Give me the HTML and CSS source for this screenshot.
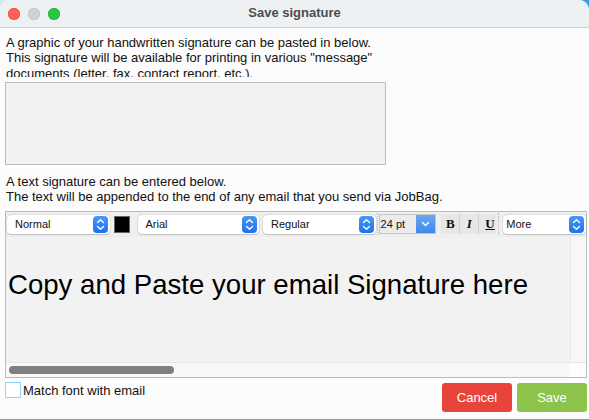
FILE: index.html
```html
<!DOCTYPE html>
<html>
<head>
<meta charset="utf-8">
<link rel="stylesheet" href="styles.css">
</head>
<body>
<div class="window">
  <div class="titlebar">
    <div class="lights">
      <span class="light red"></span>
      <span class="light gray"></span>
      <span class="light green"></span>
    </div>
    <div class="title">Save signature</div>
  </div>
  <div class="content">
    <div class="intro">
      A graphic of your handwritten signature can be pasted in below.<br>
      This signature will be available for printing in various "message"<br>
      documents (letter, fax, contact report, etc.).
    </div>
    <div class="graphic"></div>
    <div class="intro2">
      A text signature can be entered below.<br>
      The text will be appended to the end of any email that you send via JobBag.
    </div>
    <div class="editor">
      <div class="toolbar">
        <div class="select sel-normal"><span>Normal</span><span class="spin"><svg width="15" height="17" viewBox="0 0 15 17"><path d="M4.5 6.5 L7.5 3.8 L10.5 6.5 M4.5 10.5 L7.5 13.2 L10.5 10.5" fill="none" stroke="#fff" stroke-width="1.4" stroke-linecap="round" stroke-linejoin="round"/></svg></span></div>
        <div class="swatch"></div>
        <div class="select sel-font"><span>Arial</span><span class="spin"><svg width="15" height="17" viewBox="0 0 15 17"><path d="M4.5 6.5 L7.5 3.8 L10.5 6.5 M4.5 10.5 L7.5 13.2 L10.5 10.5" fill="none" stroke="#fff" stroke-width="1.4" stroke-linecap="round" stroke-linejoin="round"/></svg></span></div>
        <div class="select sel-style"><span>Regular</span><span class="spin"><svg width="15" height="17" viewBox="0 0 15 17"><path d="M4.5 6.5 L7.5 3.8 L10.5 6.5 M4.5 10.5 L7.5 13.2 L10.5 10.5" fill="none" stroke="#fff" stroke-width="1.4" stroke-linecap="round" stroke-linejoin="round"/></svg></span></div>
        <div class="sep"></div>
        <div class="size"><span class="size-val">24 pt</span><span class="size-btn"><svg width="19" height="18" viewBox="0 0 19 18"><path d="M6.5 7.5 L9.5 10.5 L12.5 7.5" fill="none" stroke="#fff" stroke-width="1.4" stroke-linecap="round" stroke-linejoin="round"/></svg></span></div>
        <div class="fmt">
          <span class="fbtn b">B</span>
          <span class="fbtn i">I</span>
          <span class="fbtn u">U</span>
        </div>
        <div class="sep sep2"></div>
        <div class="select sel-more"><span>More</span><span class="spin"><svg width="15" height="17" viewBox="0 0 15 17"><path d="M4.5 6.5 L7.5 3.8 L10.5 6.5 M4.5 10.5 L7.5 13.2 L10.5 10.5" fill="none" stroke="#fff" stroke-width="1.4" stroke-linecap="round" stroke-linejoin="round"/></svg></span></div>
      </div>
      <div class="editarea">
        <div class="edittext">Copy and Paste your email Signature here</div>
        <div class="vgutter"></div>
      </div>
      <div class="hscroll">
        <div class="htrack"><div class="thumb"></div></div>
        <div class="corner"></div>
      </div>
    </div>
    <div class="footer">
      <label class="check"><span class="box"></span><span>Match font with email</span></label>
      <div class="buttons">
        <button class="btn cancel">Cancel</button>
        <button class="btn save">Save</button>
      </div>
    </div>
  </div>
</div>
</body>
</html>
```

FILE: styles.css
```css
html, body {
  margin: 0;
  padding: 0;
}
body {
  width: 589px;
  height: 420px;
  overflow: hidden;
  background: linear-gradient(to right, #d9e7f3 0%, #cfe2f2 80%, #3c9be2 100%);
  font-family: "Liberation Sans", Arial, sans-serif;
  color: #111;
}
.window {
  width: 589px;
  height: 419px;
  background: #fcfcfc;
  border-bottom: 1px solid #9a9a9a;
  border-radius: 10px 10px 0 0;
  overflow: hidden;
  display: flex;
  flex-direction: column;
}
.titlebar {
  height: 27px;
  flex: none;
  background: #eef1f4;
  border-bottom: 1px solid #d3d3d3;
  display: flex;
  align-items: center;
  position: relative;
}
.lights {
  display: flex;
  gap: 8px;
  padding-left: 8px;
  padding-top: 1px;
}
.light {
  width: 12px;
  height: 12px;
  border-radius: 50%;
  display: block;
}
.light.red { background: #fe5f57; box-shadow: inset 0 0 0 0.5px #e0443e; }
.light.gray { background: #d1d1d1; box-shadow: inset 0 0 0 0.5px #bdbdbd; }
.light.green { background: #28c840; box-shadow: inset 0 0 0 0.5px #1dad2b; }
.title {
  position: absolute;
  left: 0;
  right: 0;
  top: 0;
  height: 27px;
  line-height: 26px;
  text-align: center;
  font-weight: bold;
  font-size: 13px;
  color: #4d4d4d;
  pointer-events: none;
}
.content {
  flex: 1;
  display: flex;
  flex-direction: column;
  padding: 6px 2px 0 5px;
}
.intro {
  font-size: 13px;
  line-height: 15.3px;
  height: 43px;
  margin-bottom: 2px;
  overflow: hidden;
  padding-left: 1px;
  padding-top: 1px;
  box-sizing: border-box;
}
.graphic {
  margin-top: 3px;
  width: 379px;
  height: 81px;
  background: #f2f2f2;
  border: 1px solid #bdbdbd;
}
.intro2 {
  margin-top: 9px;
  font-size: 13px;
  line-height: 15px;
  padding-left: 1px;
}
.editor {
  margin-top: 7px;
  border: 1px solid #bcbcbc;
  display: flex;
  flex-direction: column;
  height: 165px;
}
.toolbar {
  height: 24px;
  flex: none;
  background: #efefef;
  display: flex;
  align-items: center;
  padding-left: 1px;
  font-size: 11px;
}
.select {
  height: 19px;
  background: #fff;
  border-radius: 4px;
  box-shadow: 0 0 0 0.5px rgba(0,0,0,0.12), 0 0.5px 1px rgba(0,0,0,0.15);
  display: flex;
  align-items: center;
  justify-content: space-between;
  padding-left: 8px;
  padding-right: 2px;
  box-sizing: border-box;
  color: #111;
}
.spin {
  width: 15px;
  height: 17px;
  border-radius: 4px;
  background: linear-gradient(#4b98f8, #1b72ee);
  display: block;
}
.spin svg { display: block; }
.sel-normal { width: 103px; }
.swatch {
  width: 14px;
  height: 15px;
  background: #000;
  border: 1px solid #666;
  margin-left: 4px;
}
.sel-font { width: 122px; margin-left: 8px; }
.sel-style { width: 113px; margin-left: 4px; }
.sep {
  width: 0;
  height: 22px;
  border-left: 1px dotted #b5b5b5;
  margin: 0 1px;
}
.size {
  width: 58px;
  height: 20px;
  box-sizing: border-box;
  border: 1px solid #c4c4c4;
  background: #ececec;
  display: flex;
  align-items: center;
  justify-content: space-between;
  margin-left: 0;
}
.size-val { padding-left: 1px; color: #111; }
.size-btn {
  width: 19px;
  height: 18px;
  background: linear-gradient(#6aa7f3, #3f88ec);
  display: block;
}
.size-btn svg { display: block; }
.fmt {
  margin-left: 5px;
  width: 55px;
  height: 20px;
  display: flex;
  background: #e7e7e7;
  flex: none;
}
.fbtn {
  width: 19px;
  flex: none;
  text-align: center;
  font-family: "Liberation Serif", "Times New Roman", serif;
  font-weight: bold;
  font-size: 13px;
  line-height: 20px;
  color: #111;
  border-right: 1px solid #d2d2d2;
  box-sizing: border-box;
}
.fbtn.i { font-style: italic; }
.fbtn.u { width: 17px; text-decoration: underline; text-align: left; padding-left: 6px; border-right: 0; }
.sep2 { margin-left: 2px; margin-right: 4px; }
.sel-more { width: 83px; padding-left: 3px; }
.editarea {
  flex: 1;
  display: flex;
  background: #f2f2f2;
  border-top: 1px solid #ececec;
}
.edittext {
  flex: 1;
  font-size: 27.6px;
  line-height: 32px;
  padding: 32px 0 0 2px;
  color: #000;
  white-space: nowrap;
  overflow: hidden;
}
.vgutter {
  width: 15px;
  background: #f8f8f8;
  border-left: 1px solid #e9e9e9;
}
.hscroll {
  height: 14px;
  flex: none;
  display: flex;
  border-top: 1px solid #e6e6e6;
  background: #f8f8f8;
}
.htrack {
  flex: 1;
  padding: 3px 0 0 3px;
}
.thumb {
  width: 165px;
  height: 8px;
  border-radius: 4px;
  background: #7f7f7f;
}
.corner {
  width: 16px;
  background: #fdfdfd;
}
.footer {
  display: flex;
  justify-content: space-between;
  align-items: flex-start;
}
.check {
  display: flex;
  align-items: center;
  gap: 2px;
  font-size: 13px;
  margin-top: 4px;
  color: #111;
}
.box {
  width: 14px;
  height: 14px;
  border: 1px solid #8fd4f3;
  background: #fff;
  display: block;
}
.buttons {
  display: flex;
  gap: 5px;
  margin-top: 5px;
}
.btn {
  width: 70px;
  height: 29px;
  border: 0;
  border-radius: 3px;
  color: #fff;
  font-family: "Liberation Sans", Arial, sans-serif;
  font-size: 13px;
  padding: 0;
}
.btn.cancel { background: #e8443c; }
.btn.save { background: #8cc34b; }
```
